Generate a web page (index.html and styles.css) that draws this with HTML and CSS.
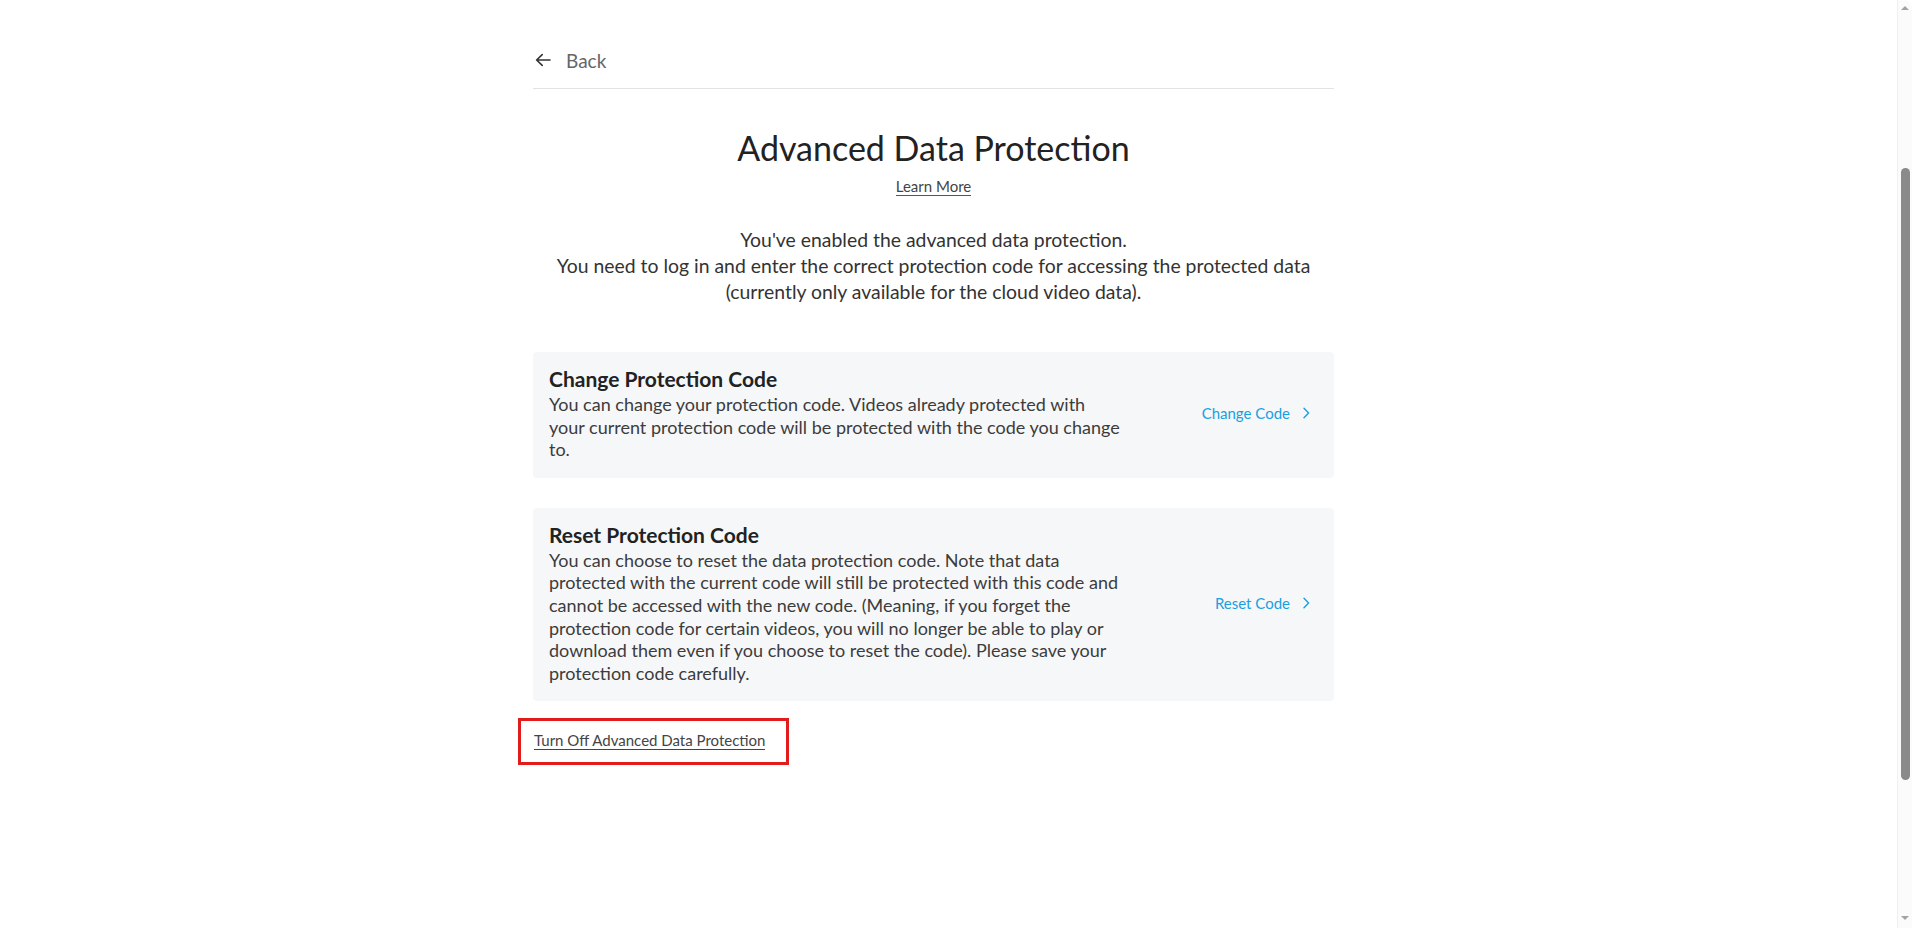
FILE: index.html
```html
<!DOCTYPE html>
<html lang="en">
<head>
<meta charset="utf-8">
<title>Advanced Data Protection</title>
<link rel="stylesheet" href="styles.css">
</head>
<body>
<div class="page">
  <header class="topbar">
    <a class="back" href="#">
      <svg class="back-icon" width="16" height="16" viewBox="0 0 16 16" aria-hidden="true"><path d="M15 8H1.6M7.2 2.6 1.6 8l5.6 5.4" fill="none" stroke="#333" stroke-width="1.6" stroke-linecap="round" stroke-linejoin="round"/></svg>
      <span>Back</span>
    </a>
  </header>
  <main class="content">
    <h1 class="title">Advanced Data Protection</h1>
    <a class="learn" href="#">Learn More</a>
    <p class="intro">You've enabled the advanced data protection.<br>You need to log in and enter the correct protection code for accessing the protected data<br>(currently only available for the cloud video data).</p>

    <section class="card">
      <div class="card-text">
        <h2 class="card-title">Change Protection Code</h2>
        <p class="card-desc">You can change your protection code. Videos already protected with<br>your current protection code will be protected with the code you change<br>to.</p>
      </div>
      <a class="action" href="#">Change Code<svg class="chev" width="8" height="12" viewBox="0 0 8 12" aria-hidden="true"><path d="M2 1.2 6.6 6 2 10.8" fill="none" stroke="#1a9fdf" stroke-width="1.4" stroke-linecap="round" stroke-linejoin="round"/></svg></a>
    </section>

    <section class="card">
      <div class="card-text">
        <h2 class="card-title">Reset Protection Code</h2>
        <p class="card-desc">You can choose to reset the data protection code. Note that data<br>protected with the current code will still be protected with this code and<br>cannot be accessed with the new code. (Meaning, if you forget the<br>protection code for certain videos, you will no longer be able to play or<br>download them even if you choose to reset the code). Please save your<br>protection code carefully.</p>
      </div>
      <a class="action" href="#">Reset Code<svg class="chev" width="8" height="12" viewBox="0 0 8 12" aria-hidden="true"><path d="M2 1.2 6.6 6 2 10.8" fill="none" stroke="#1a9fdf" stroke-width="1.4" stroke-linecap="round" stroke-linejoin="round"/></svg></a>
    </section>

    <div class="turnoff-row">
      <div class="turnoff-box">
        <a class="turnoff" href="#">Turn Off Advanced Data Protection</a>
      </div>
    </div>
  </main>
</div>
<div class="scrollbar" aria-hidden="true">
  <span class="sb-up"></span>
  <span class="sb-thumb"></span>
  <span class="sb-down"></span>
</div>
</body>
</html>
```

FILE: styles.css
```css
* { box-sizing: border-box; }
html, body { margin: 0; padding: 0; background: #fff; }
body {
  font-family: "Lato", "Noto Sans", sans-serif;
  color: #333;
  min-height: 928px;
}
a { text-decoration: none; }

.page {
  width: 801px;
  margin-left: 533px;
}

.topbar {
  padding: 48px 0 16px 2px;
  border-bottom: 1px solid #e2e2e2;
}
.back {
  display: flex;
  align-items: center;
  gap: 15px;
  height: 24px;
  color: #666;
  font-size: 19px;
}
.back-icon { display: block; }

.content {
  display: flex;
  flex-direction: column;
}
.title {
  margin: 39px 0 0;
  text-align: center;
  font-size: 34px;
  line-height: 40px;
  font-weight: 400;
  color: #222;
}
.learn {
  align-self: center;
  margin-top: 9px;
  font-size: 15px;
  line-height: 18px;
  color: #444;
  border-bottom: 1px solid #555;
}
.intro {
  margin: 31px 0 0;
  text-align: center;
  font-size: 19.4px;
  line-height: 26px;
  color: #333;
}

.card {
  display: flex;
  align-items: center;
  margin-top: 47px;
  padding: 13px 24px 17px 16px;
  background: #f6f7f9;
  border-radius: 4px;
}
.card + .card { margin-top: 30px; }
.card-text { width: 630px; flex: none; }
.card-title {
  margin: 0;
  font-size: 21px;
  line-height: 28px;
  font-weight: 700;
  color: #222;
}
.card-desc {
  margin: 0;
  font-size: 18px;
  line-height: 22.6px;
  color: #3c3c3c;
}
.action {
  margin-left: auto;
  display: flex;
  align-items: center;
  gap: 12px;
  font-size: 15px;
  color: #1a9fdf;
}
.chev { display: block; }

.turnoff-row {
  margin: 17px 0 0 -15px;
  display: flex;
}
.turnoff-box {
  border: 3px solid #e21b1b;
  padding: 10px 21px 12px 13px;
  display: flex;
}
.turnoff {
  font-size: 15px;
  line-height: 18px;
  color: #444;
  border-bottom: 1px solid #444;
}

.scrollbar {
  position: fixed;
  top: 0;
  right: 0;
  width: 15px;
  height: 100%;
  background: #fbfbfb;
  border-left: 1px solid #f0f0f0;
  border-top-right-radius: 8px;
}
.sb-up, .sb-down {
  position: absolute;
  left: 3px;
  width: 0;
  height: 0;
  border-left: 4px solid transparent;
  border-right: 4px solid transparent;
}
.sb-up { top: 6px; border-bottom: 4px solid #a3a3a3; }
.sb-down { bottom: 8px; border-top: 4px solid #a3a3a3; }
.sb-thumb {
  position: absolute;
  left: 3px;
  width: 9px;
  top: 168px;
  height: 612px;
  background: #8a8a8a;
  border-radius: 5px;
}
```
